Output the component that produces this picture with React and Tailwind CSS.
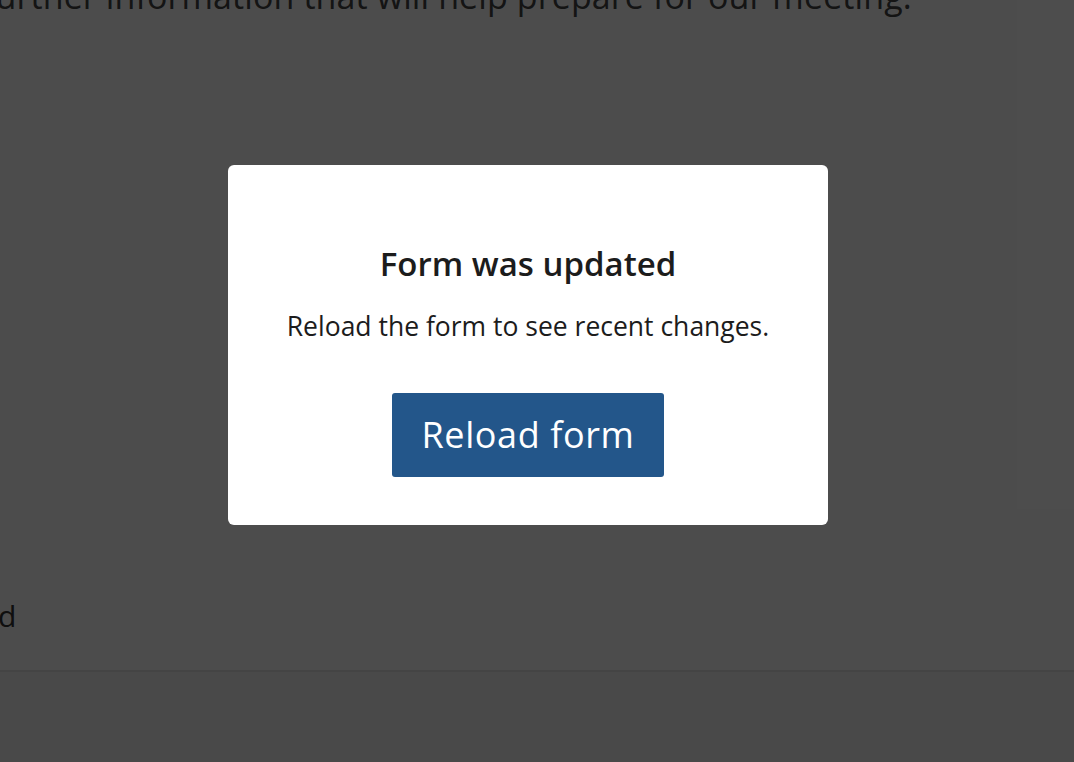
export default function App() {
  return (
    <div className="relative h-[762px] w-[1074px] overflow-hidden bg-white font-['Open_Sans',sans-serif]">
      {/* page behind the dialog */}
      <div className="flex h-full flex-col">
        <p className="-mt-[26px] -ml-[16px] whitespace-nowrap text-[34px] leading-[44px] tracking-[0.1px] text-[#444]">
          further information that will help prepare for our meeting.
        </p>
        <div className="mt-auto flex h-[110px] items-center border-b-2 border-[#e4e4e4]">
          <span className="-ml-[2px] text-[30px] leading-[36px] text-[#333]">d</span>
        </div>
        <div className="h-[90px] bg-[#f6f6f6]" />
      </div>

      {/* modal overlay */}
      <div className="absolute inset-0 flex items-start justify-center bg-black/70 pt-[165px] pr-[18px]">
        <div className="flex h-[360px] w-[600px] flex-col items-center rounded-[6px] bg-white pt-[78px]">
          <h2 className="text-[33px] font-semibold leading-[42px] text-[#1c1c1c]">Form was updated</h2>
          <p className="mt-[24px] text-[26.5px] leading-[34px] text-[#1c1c1c]">
            Reload the form to see recent changes.
          </p>
          <button className="mt-[50px] flex h-[84px] w-[272px] items-center justify-center rounded-[3px] bg-[#23568a] text-[36px] font-medium tracking-[0.6px] text-white">
            Reload form
          </button>
        </div>
      </div>
    </div>
  );
}
